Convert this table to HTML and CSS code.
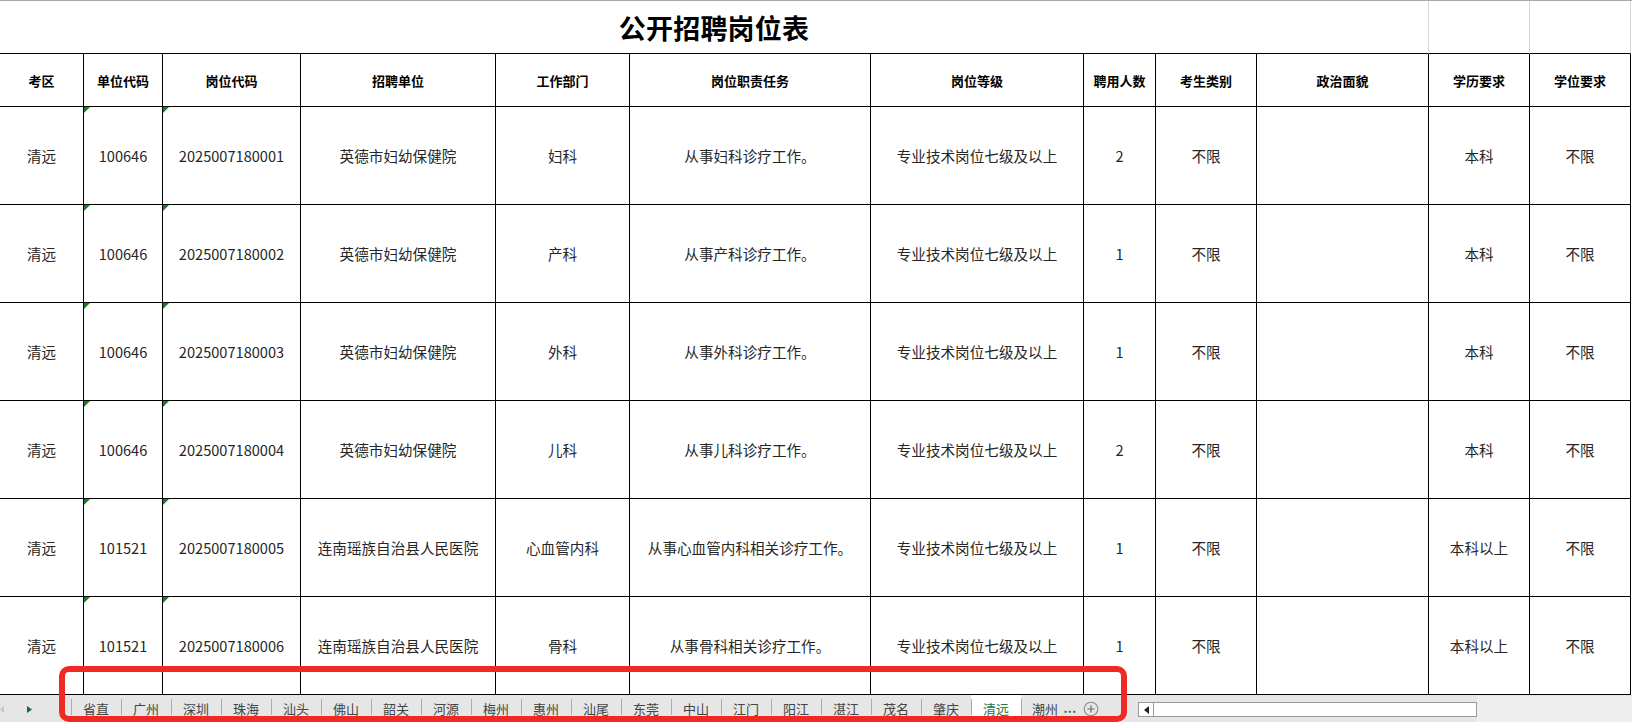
FILE: index.html
```html
<!DOCTYPE html>
<html lang="zh-CN">
<head>
<meta charset="utf-8">
<title>公开招聘岗位表</title>
<link rel="stylesheet" href="styles.css">
</head>
<body>
<div class="app">
  <div class="sheet">
    <table class="grid">
      <colgroup>
        <col class="c1"><col class="c2"><col class="c3"><col class="c4"><col class="c5"><col class="c6">
        <col class="c7"><col class="c8"><col class="c9"><col class="c10"><col class="c11"><col class="c12">
      </colgroup>
      <tr class="title-row">
        <td colspan="10" class="title">公开招聘岗位表</td>
        <td class="gl"></td>
        <td class="gl"></td>
      </tr>
      <tr class="head-row">
        <th class="first">考区</th><th>单位代码</th><th>岗位代码</th><th>招聘单位</th><th>工作部门</th><th>岗位职责任务</th>
        <th>岗位等级</th><th>聘用人数</th><th>考生类别</th><th>政治面貌</th><th>学历要求</th><th>学位要求</th>
      </tr>
      <tr class="data-row">
        <td class="first">清远</td><td class="txt">100646</td><td class="txt">2025007180001</td><td>英德市妇幼保健院</td><td>妇科</td><td>从事妇科诊疗工作。</td>
        <td>专业技术岗位七级及以上</td><td>2</td><td>不限</td><td></td><td>本科</td><td>不限</td>
      </tr>
      <tr class="data-row">
        <td class="first">清远</td><td class="txt">100646</td><td class="txt">2025007180002</td><td>英德市妇幼保健院</td><td>产科</td><td>从事产科诊疗工作。</td>
        <td>专业技术岗位七级及以上</td><td>1</td><td>不限</td><td></td><td>本科</td><td>不限</td>
      </tr>
      <tr class="data-row">
        <td class="first">清远</td><td class="txt">100646</td><td class="txt">2025007180003</td><td>英德市妇幼保健院</td><td>外科</td><td>从事外科诊疗工作。</td>
        <td>专业技术岗位七级及以上</td><td>1</td><td>不限</td><td></td><td>本科</td><td>不限</td>
      </tr>
      <tr class="data-row">
        <td class="first">清远</td><td class="txt">100646</td><td class="txt">2025007180004</td><td>英德市妇幼保健院</td><td>儿科</td><td>从事儿科诊疗工作。</td>
        <td>专业技术岗位七级及以上</td><td>2</td><td>不限</td><td></td><td>本科</td><td>不限</td>
      </tr>
      <tr class="data-row">
        <td class="first">清远</td><td class="txt">101521</td><td class="txt">2025007180005</td><td>连南瑶族自治县人民医院</td><td>心血管内科</td><td>从事心血管内科相关诊疗工作。</td>
        <td>专业技术岗位七级及以上</td><td>1</td><td>不限</td><td></td><td>本科以上</td><td>不限</td>
      </tr>
      <tr class="data-row">
        <td class="first">清远</td><td class="txt">101521</td><td class="txt">2025007180006</td><td>连南瑶族自治县人民医院</td><td>骨科</td><td>从事骨科相关诊疗工作。</td>
        <td>专业技术岗位七级及以上</td><td>1</td><td>不限</td><td></td><td>本科以上</td><td>不限</td>
      </tr>
    </table>
  </div>

  <div class="tabbar">
    <div class="nav">
      <svg class="nav-left" width="4" height="7" viewBox="0 0 4 7"><polygon points="4,0 0,3.5 4,7" fill="#c4c4c4"/></svg>
      <svg class="nav-right" width="5" height="7" viewBox="0 0 5 7"><polygon points="0,0 5,3.5 0,7" fill="#1e6b3a"/></svg>
    </div>
    <div class="tabs">
      <div class="tab">省直</div>
      <div class="tab">广州</div>
      <div class="tab">深圳</div>
      <div class="tab">珠海</div>
      <div class="tab">汕头</div>
      <div class="tab">佛山</div>
      <div class="tab">韶关</div>
      <div class="tab">河源</div>
      <div class="tab">梅州</div>
      <div class="tab">惠州</div>
      <div class="tab">汕尾</div>
      <div class="tab">东莞</div>
      <div class="tab">中山</div>
      <div class="tab">江门</div>
      <div class="tab">阳江</div>
      <div class="tab">湛江</div>
      <div class="tab">茂名</div>
      <div class="tab">肇庆</div>
      <div class="tab active">清远</div>
      <div class="tab last">潮州</div>
    </div>
    <div class="more">...</div>
    <div class="add">
      <svg width="16" height="16" viewBox="0 0 16 16"><circle cx="8" cy="8" r="6.8" fill="none" stroke="#8a8a8a" stroke-width="1.1"/><path d="M8 4.5v7M4.5 8h7" stroke="#6a6a6a" stroke-width="1.2"/></svg>
    </div>
    <div class="split"></div>
    <div class="hscroll">
      <div class="sarrow"><svg width="5" height="8" viewBox="0 0 5 8"><polygon points="5,0 0,4 5,8" fill="#222"/></svg></div>
      <div class="thumb"></div>
    </div>
    <div class="scroll-rest"></div>
  </div>

  <div class="annot"></div>
</div>
</body>
</html>
```

FILE: styles.css
```css
html, body {
  margin: 0;
  padding: 0;
  background: #ffffff;
  overflow: hidden;
}

body {
  width: 1632px;
  height: 722px;
  font-family: "Noto Sans CJK SC", "Liberation Sans", sans-serif;
}

.app {
  position: relative;
  width: 1632px;
  height: 722px;
  display: flex;
  flex-direction: column;
}

.sheet {
  box-sizing: border-box;
  height: 695px;
  border-top: 1px solid #a8a8a8;
  overflow: hidden;
  flex: none;
}

.grid {
  border-collapse: separate;
  border-spacing: 0;
  table-layout: fixed;
  width: 1631px;
}

.c1 { width: 84px; }
.c2 { width: 79px; }
.c3 { width: 138px; }
.c4 { width: 195px; }
.c5 { width: 134px; }
.c6 { width: 241px; }
.c7 { width: 213px; }
.c8 { width: 72px; }
.c9 { width: 101px; }
.c10 { width: 172px; }
.c11 { width: 101px; }
.c12 { width: 101px; }

.grid td,
.grid th {
  box-sizing: border-box;
  padding: 0;
  border-right: 1px solid #000;
  border-bottom: 1px solid #000;
  text-align: center;
  vertical-align: middle;
  white-space: nowrap;
  overflow: hidden;
}

.title-row { height: 53px; }

.grid .title {
  font-size: 27px;
  font-weight: 700;
  color: #000;
  border-right: 1px solid #d6d6d6;
  letter-spacing: 0.2px;
}

.grid .gl {
  border-right: 1px solid #d6d6d6;
}

.head-row { height: 53px; }

.grid th {
  font-size: 13px;
  font-weight: 700;
  color: #000;
}

.data-row { height: 98px; }

.grid td {
  font-size: 14.6px;
  font-weight: 400;
  color: #262626;
}

.grid .txt {
  position: relative;
}

.grid .txt::before {
  content: "";
  position: absolute;
  left: 0;
  top: 0;
  width: 0;
  height: 0;
  border-top: 6px solid #1f7a2a;
  border-right: 6px solid transparent;
}

/* sheet tab bar */
.tabbar {
  flex: none;
  height: 27px;
  background: #e6e6e6;
  display: flex;
  align-items: stretch;
  font-size: 13px;
  color: #444;
}

.nav {
  width: 71px;
  flex: none;
  display: flex;
  align-items: center;
  gap: 23px;
  padding-top: 2px;
  box-sizing: border-box;
}

.tabs {
  display: flex;
  align-items: stretch;
}

.tab {
  position: relative;
  width: 50px;
  display: flex;
  align-items: center;
  justify-content: center;
  padding-bottom: 1px;
  box-sizing: border-box;
}

.tab::before {
  content: "";
  position: absolute;
  left: 0;
  top: 4px;
  height: 16px;
  border-left: 1px solid #ababab;
}

.tab.active {
  background: #ffffff;
  color: #217346;
}

.tab.last {
  width: 38px;
  justify-content: flex-end;
  padding-right: 1px;
}

.more {
  width: 22px;
  display: flex;
  align-items: center;
  justify-content: center;
  color: #217346;
  font-weight: 700;
  font-size: 12px;
  letter-spacing: 0.5px;
  padding-bottom: 2px;
  box-sizing: border-box;
}

.add {
  width: 20px;
  display: flex;
  align-items: center;
  justify-content: center;
  padding-top: 1px;
  box-sizing: border-box;
}

.split {
  width: 37px;
}

.hscroll {
  width: 339px;
  height: 15px;
  margin-top: 7px;
  border: 1px solid #9a9a9a;
  box-sizing: border-box;
  background: #ffffff;
  display: flex;
}

.sarrow {
  width: 15px;
  border-right: 1px solid #9a9a9a;
  display: flex;
  align-items: center;
  justify-content: center;
  box-sizing: border-box;
}

.thumb {
  flex: 1;
}

.scroll-rest {
  flex: 1;
  background: #eeeeee;
  margin-top: 1px;
}

/* red annotation box drawn over the tab strip */
.annot {
  position: absolute;
  left: 59px;
  top: 666px;
  width: 1068px;
  height: 56px;
  box-sizing: border-box;
  border: 6px solid #ee2a23;
  border-radius: 10px;
  pointer-events: none;
}
```
